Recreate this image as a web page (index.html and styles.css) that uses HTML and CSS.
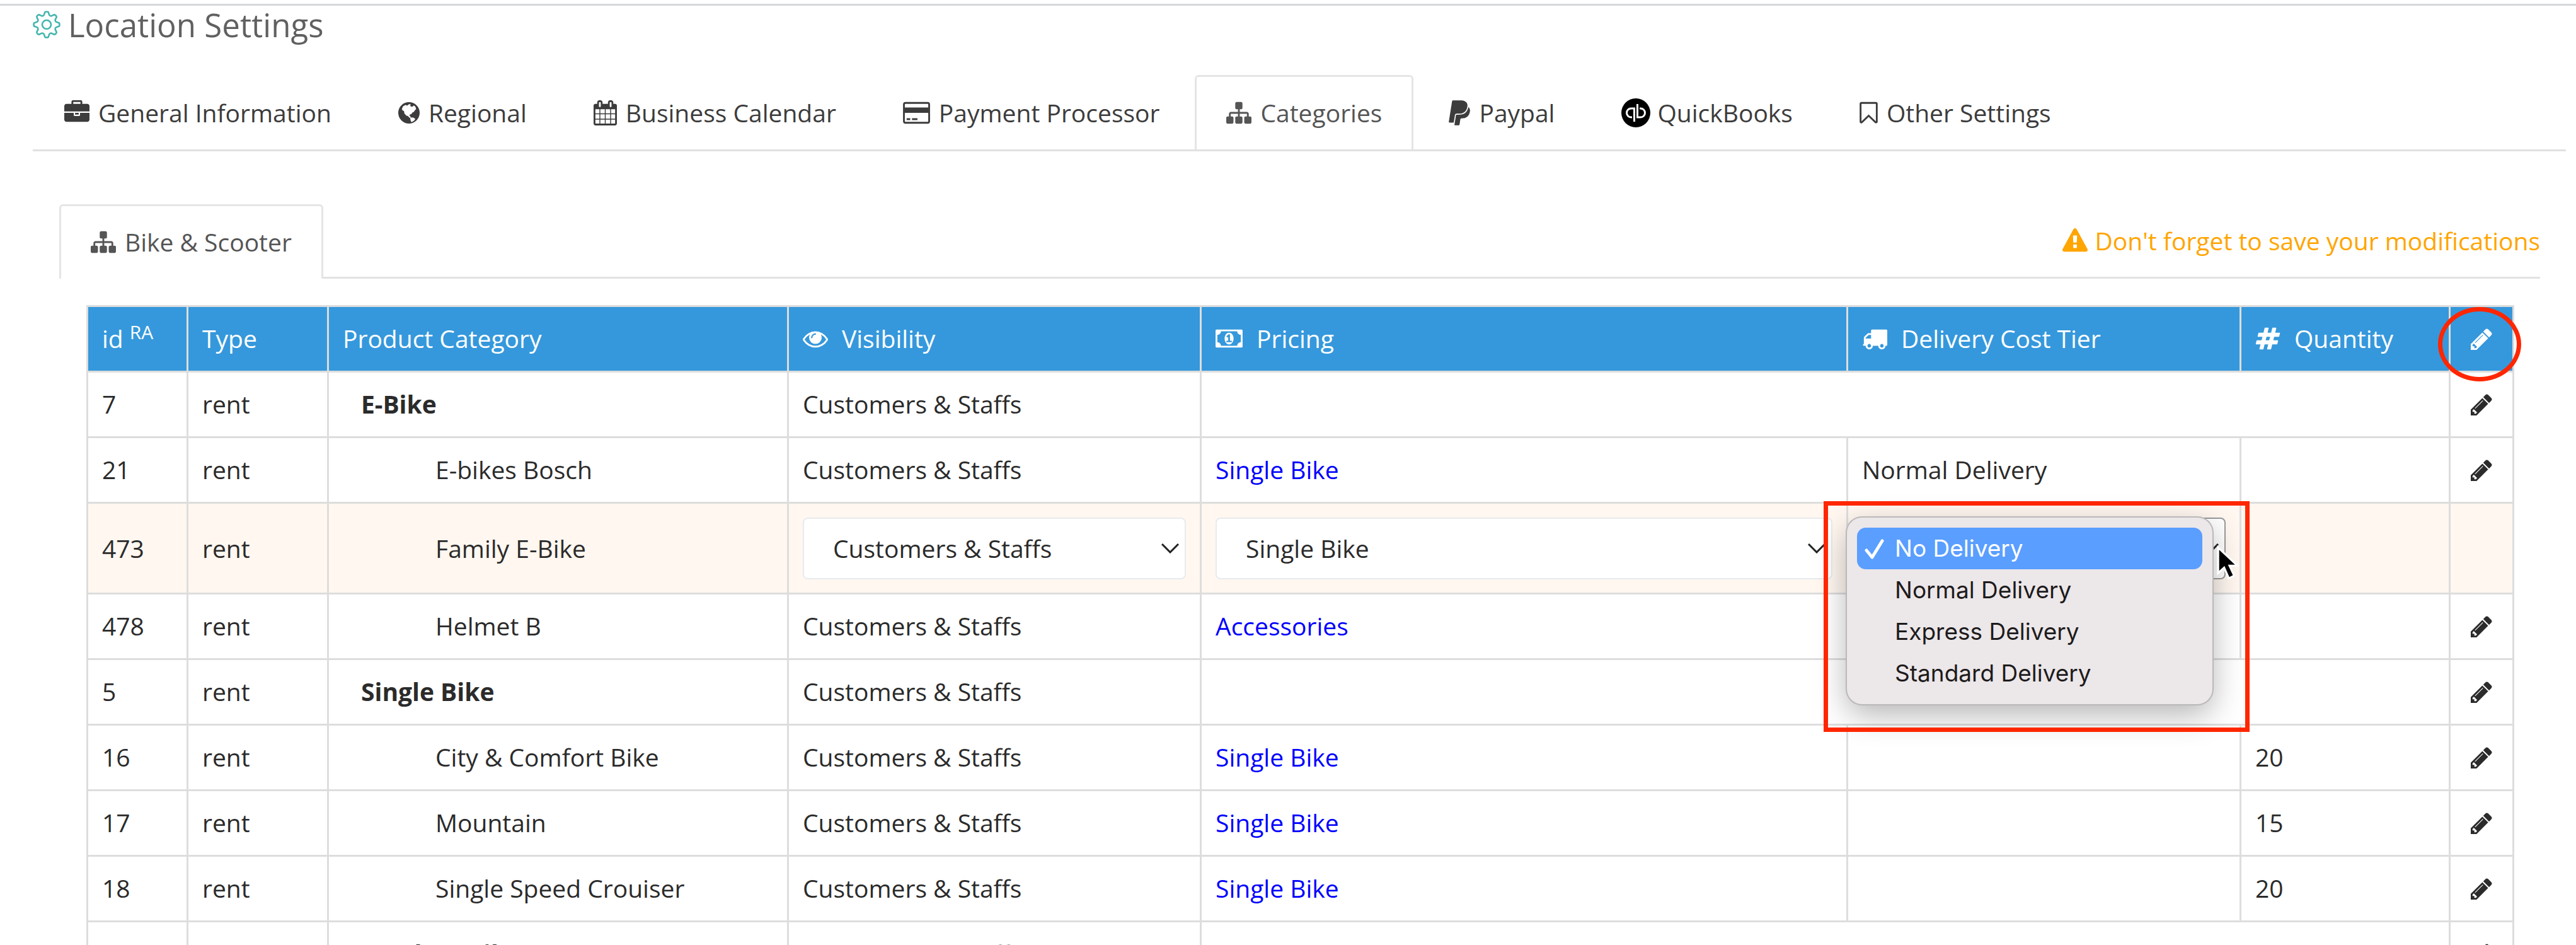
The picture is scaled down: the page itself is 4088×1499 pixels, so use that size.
FILE: index.html
```html
<!DOCTYPE html>
<html lang="en">

<head>
    <meta charset="UTF-8">
    <title>Location Settings</title>
    <link rel="stylesheet" href="styles.css">
</head>

<body>
    <!-- icon sprite -->
    <svg class="sprite" aria-hidden="true">
        <symbol id="i-gear" viewBox="0 0 44 44">
            <path fill="none" stroke="currentColor" stroke-width="2.6" stroke-linejoin="round" d="M19.5 2Q22 1 24.5 2L26.4 7.1Q28 8.600 29.4 8.400L34.300 6.200Q37 7 37.800 9.700L35.600 14.600Q35.400 16 36.900 17.600L42 19.500Q43 22 42 24.500L36.900 26.400Q35.400 28 35.600 29.400L37.800 34.300Q37 37 34.300 37.800L29.400 35.600Q28 35.400 26.400 36.900L24.500 42Q22 43 19.500 42L17.600 36.900Q16 35.400 14.600 35.600L9.700 37.800Q7 37 6.200 34.300L8.400 29.400Q8.600 28 7.100 26.400L2 24.500Q1 22 2 19.500L7.100 17.600Q8.600 16 8.400 14.600L6.200 9.700Q7 7 9.700 6.200L14.600 8.400Q16 8.600 17.600 7.100Z"/>
            <circle cx="22" cy="22" r="7" fill="none" stroke="currentColor" stroke-width="2.6"/>
        </symbol>
        <symbol id="i-briefcase" viewBox="0 0 1792 1792">
            <path d="M640 256h512v-128h-512v128zm1152 640v480q0 66-47 113t-113 47h-1472q-66 0-113-47t-47-113v-480h672v160q0 26 19 45t45 19h320q26 0 45-19t19-45v-160h672zm-768 0v128h-256v-128h256zm768-480v384h-1792v-384q0-66 47-113t113-47h352v-160q0-40 28-68t68-28h576q40 0 68 28t28 68v160h352q66 0 113 47t47 113z"/>
        </symbol>
        <symbol id="i-globe" viewBox="128 0 1536 1792">
            <circle cx="896" cy="896" r="768"/>
            <path fill="#fff" d="M390 600l90-180 170-90 120 50 130-110 130 20-50 100 90 60 110-10 40-70 110 50 60 120 20 110-80 40-70 130-130 60-60 110-110 20-20 90 70 70 20 110-110-40-90-110-130-40-130-150-30-170-110-60zM980 1280l100-60 160 30 110 90-80 110-180 110-60-60z"/>
        </symbol>
        <symbol id="i-calendar" viewBox="64 0 1664 1792">
            <path d="M192 1664h288v-288h-288v288zm352 0h320v-288h-320v288zm-352-352h288v-320h-288v320zm352 0h320v-320h-320v320zm-352-384h288v-288h-288v288zm736 736h320v-288h-320v288zm-384-736h320v-288h-320v288zm768 736h288v-288h-288v288zm-384-352h320v-320h-320v320zm-352-864v-288q0-13-9.500-22.500t-22.500-9.500h-64q-13 0-22.500 9.500t-9.500 22.500v288q0 13 9.500 22.500t22.500 9.500h64q13 0 22.500-9.500t9.500-22.500zm736 864h288v-320h-288v320zm-384-384h320v-288h-320v288zm384 0h288v-288h-288v288zm32-480v-288q0-13-9.500-22.500t-22.500-9.500h-64q-13 0-22.500 9.500t-9.500 22.500v288q0 13 9.500 22.500t22.500 9.500h64q13 0 22.500-9.500t9.500-22.500zm384-64v1280q0 52-38 90t-90 38h-1408q-52 0-90-38t-38-90v-1280q0-52 38-90t90-38h128v-96q0-66 47-113t113-47h64q66 0 113 47t47 113v96h384v-96q0-66 47-113t113-47h64q66 0 113 47t47 113v96h128q52 0 90 38t38 90z"/>
        </symbol>
        <symbol id="i-card" viewBox="0 0 1920 1792">
            <rect x="64" y="192" width="1792" height="1408" rx="110" fill="none" stroke="currentColor" stroke-width="128"/>
            <path d="M64 512h1792v384h-1792zM256 1280h256v128h-256zM640 1280h384v128h-384z"/>
        </symbol>
        <symbol id="i-sitemap" viewBox="0 0 1792 1792">
            <path d="M1792 1248v320q0 40-28 68t-68 28h-320q-40 0-68-28t-28-68v-320q0-40 28-68t68-28h96v-192h-512v192h96q40 0 68 28t28 68v320q0 40-28 68t-68 28h-320q-40 0-68-28t-28-68v-320q0-40 28-68t68-28h96v-192h-512v192h96q40 0 68 28t28 68v320q0 40-28 68t-68 28h-320q-40 0-68-28t-28-68v-320q0-40 28-68t68-28h96v-192q0-52 38-90t90-38h512v-192h-96q-40 0-68-28t-28-68v-320q0-40 28-68t68-28h320q40 0 68 28t28 68v320q0 40-28 68t-68 28h-96v192h512q52 0 90 38t38 90v192h96q40 0 68 28t28 68z"/>
        </symbol>
        <symbol id="i-paypal" viewBox="0 0 1536 1792">
            <path d="M1519 646q18 84-4 204-87 444-565 444h-44q-25 0-44 16.500t-24 42.500l-4 19-55 346-2 15q-5 26-24.500 42.500t-44.500 16.500h-251q-21 0-33-15t-9-36q9-56 26.500-168t26.500-168 27-167.500 27-167.500q5-37 43-37h131q133 2 236-21 175-39 287-144 102-95 155-246 24-70 35-133 1-6 2.500-7.500t3.500-1 6 3.500q79 59 98 162zm-172-282q0 107-46 236-80 233-302 315-113 40-252 42 0 1-90 1l-90-1q-100 0-118 96-2 8-85 530-1 10-12 10h-295q-22 0-36.500-16.500t-11.500-38.500l232-1471q5-29 27.500-48t51.500-19h598q34 0 97.500 13t111.500 32q107 41 163.500 123t56.500 196z"/>
        </symbol>
        <symbol id="i-quickbooks" viewBox="0 0 46 46">
            <circle cx="23" cy="23" r="23" fill="#000"/>
            <path fill="none" stroke="#fff" stroke-width="3" d="M17 30h-1.500a7 7 0 0 1 0-14h5v21M29 30h1.500a7 7 0 0 0 0-14h-1.500M25.500 9v21h4"/>
        </symbol>
        <symbol id="i-bookmark" viewBox="256 0 1280 1792">
            <path d="M1408 256h-1024v1242l423-406 89-85 89 85 423 406v-1242zm12-128q23 0 44 9 33 13 52.500 41t19.500 62v1289q0 34-19.500 62t-52.500 41q-19 8-44 8-48 0-83-32l-441-424-441 424q-36 33-83 33-23 0-44-9-33-13-52.500-41t-19.500-62v-1289q0-34 19.500-62t52.500-41q21-9 44-9h1048z"/>
        </symbol>
        <symbol id="i-warning" viewBox="0 0 1792 1792">
            <path d="M1024 1375v-190q0-14-9.500-23.500t-22.500-9.500h-192q-13 0-22.500 9.500t-9.500 23.500v190q0 14 9.500 23.500t22.500 9.500h192q13 0 22.500-9.500t9.500-23.500zm-2-374l18-459q0-12-10-19-13-11-24-11h-220q-11 0-24 11-10 7-10 21l17 457q0 10 10 16.500t24 6.500h185q14 0 23.500-6.500t10.500-16.500zm-14-934l768 1408q35 63-2 126-17 29-46.500 46t-63.500 17h-1536q-34 0-63.500-17t-46.500-46q-37-63-2-126l768-1408q17-31 47-49t65-18 65 18 47 49z"/>
        </symbol>
        <symbol id="i-eye" viewBox="0 0 1792 1792">
            <path d="M1664 960q-152-236-381-353 61 104 61 225 0 185-131.500 316.500t-316.500 131.500-316.500-131.500-131.500-316.500q0-121 61-225-229 117-381 353 133 205 333.500 326.500t434.500 121.500 434.500-121.500 333.500-326.500zm-720-384q0-20-14-34t-34-14q-125 0-214.500 89.500t-89.500 214.500q0 20 14 34t34 14 34-14 14-34q0-86 61-147t147-61q20 0 34-14t14-34zm848 384q0 34-20 69-140 230-376.500 368.500t-499.500 138.500-499.500-139-376.500-368q-20-35-20-69t20-69q140-229 376.500-368t499.500-139 499.500 139 376.500 368q20 35 20 69z"/>
        </symbol>
        <symbol id="i-money" viewBox="0 0 1920 1792">
            <path d="M768 1152h384v-96h-128v-448h-114l-148 137 77 80q42-37 55-57h2v288h-128v96zm512-256q0 70-21 142t-59.500 134-101.500 101-138 39-138-39-101.500-101-59.500-134-21-142 21-142 59.500-134 101.500-101 138-39 138 39 101.500 101 59.500 134 21 142zm512 256v-512q-106 0-181-75t-75-181h-1152q0 106-75 181t-181 75v512q106 0 181 75t75 181h1152q0-106 75-181t181-75zm128-832v1152q0 26-19 45t-45 19h-1792q-26 0-45-19t-19-45v-1152q0-26 19-45t45-19h1792q26 0 45 19t19 45z"/>
        </symbol>
        <symbol id="i-truck" viewBox="0 0 1792 1792">
            <path d="M640 1408q0-52-38-90t-90-38-90 38-38 90 38 90 90 38 90-38 38-90zm-384-512h384v-256h-158q-13 0-22 9l-195 195q-9 9-9 22v30zm1280 512q0-52-38-90t-90-38-90 38-38 90 38 90 90 38 90-38 38-90zm256-1088v1024q0 15-4 26.500t-13.500 18.500-16.500 11.500-23.500 6-22.500 2-25.500 0-22.500-.5q0 106-75 181t-181 75-181-75-75-181h-384q0 106-75 181t-181 75-181-75-75-181h-64q-3 0-22.500.5t-25.500 0-22.500-2-23.500-6-16.500-11.500-13.500-18.500-4-26.500q0-26 19-45t45-19v-320q0-8-.5-35t0-38 2.500-34.500 6.500-37 14-30.500 22.500-30l198-198q19-19 50.500-32t58.500-13h160v-192q0-26 19-45t45-19h1024q26 0 45 19t19 45z"/>
        </symbol>
        <symbol id="i-hash" viewBox="0 0 1792 1792">
            <path d="M991 1024l64-256h-254l-64 256h254zm768-504l-56 224q-7 24-31 24h-327l-64 256h311q15 0 25 12 10 14 6 28l-56 224q-5 24-31 24h-327l-81 328q-7 24-31 24h-224q-16 0-26-12-9-12-6-28l78-312h-254l-81 328q-7 24-31 24h-225q-15 0-25-12-9-12-6-28l78-312h-311q-15 0-25-12-9-12-6-28l56-224q7-24 31-24h327l64-256h-311q-15 0-25-12-10-14-6-28l56-224q5-24 31-24h327l81-328q7-24 32-24h224q15 0 25 12 9 12 6 28l-78 312h254l81-328q7-24 32-24h224q15 0 25 12 9 12 6 28l-78 312h311q15 0 25 12 9 12 6 28z"/>
        </symbol>
        <symbol id="i-pencil" viewBox="128 0 1536 1792">
            <path d="M491 1536l91-91-235-235-91 91v107h128v128h107zm523-928q0-22-22-22-10 0-17 7l-542 542q-7 7-7 17 0 22 22 22 10 0 17-7l542-542q7-7 7-17zm-54-192l416 416-832 832h-416v-416zm683 96q0 53-37 90l-166 166-416-416 166-165q36-38 90-38 53 0 91 38l235 234q37 39 37 91z"/>
        </symbol>
    </svg>

    <header class="page-title">
        <svg class="gear"><use href="#i-gear"/></svg>
        <h1>Location Settings</h1>
    </header>

    <nav class="tabs main-tabs">
        <a class="tab" href="#general"><svg class="icon"><use href="#i-briefcase"/></svg>General Information</a>
        <a class="tab" href="#regional"><svg class="icon w34"><use href="#i-globe"/></svg>Regional</a>
        <a class="tab" href="#calendar"><svg class="icon w37"><use href="#i-calendar"/></svg>Business Calendar</a>
        <a class="tab" href="#payment"><svg class="icon w43"><use href="#i-card"/></svg>Payment Processor</a>
        <a class="tab active" href="#categories"><svg class="icon"><use href="#i-sitemap"/></svg>Categories</a>
        <a class="tab" href="#paypal"><svg class="icon w34"><use href="#i-paypal"/></svg>Paypal</a>
        <a class="tab" href="#quickbooks"><svg class="icon qb"><use href="#i-quickbooks"/></svg>QuickBooks</a>
        <a class="tab" href="#other"><svg class="icon w29"><use href="#i-bookmark"/></svg>Other Settings</a>
    </nav>

    <main>
        <div class="tabs sub-tabs">
            <a class="tab active" href="#bike"><svg class="icon"><use href="#i-sitemap"/></svg>Bike &amp; Scooter</a>
            <p class="notice"><svg class="icon"><use href="#i-warning"/></svg>Don't forget to save your modifications</p>
        </div>

        <div class="table-wrap">
            <table>
                <colgroup>
                    <col class="c-id">
                    <col class="c-type">
                    <col class="c-product">
                    <col class="c-visibility">
                    <col class="c-pricing">
                    <col class="c-delivery">
                    <col class="c-quantity">
                    <col class="c-edit">
                </colgroup>
                <thead>
                    <tr>
                        <th>id <sup>RA</sup></th>
                        <th>Type</th>
                        <th>Product Category</th>
                        <th><span class="head"><svg class="icon"><use href="#i-eye"/></svg>Visibility</span></th>
                        <th><span class="head"><svg class="icon w43"><use href="#i-money"/></svg>Pricing</span></th>
                        <th><span class="head"><svg class="icon"><use href="#i-truck"/></svg>Delivery Cost Tier</span></th>
                        <th><span class="head"><svg class="icon"><use href="#i-hash"/></svg>Quantity</span></th>
                        <th class="edit"><button type="button" aria-label="Edit all"><svg class="icon w34"><use href="#i-pencil"/></svg></button><span class="mark-circle"></span></th>
                    </tr>
                </thead>
                <tbody>
                    <tr>
                        <td>7</td>
                        <td>rent</td>
                        <td class="parent">E-Bike</td>
                        <td>Customers &amp; Staffs</td>
                        <td colspan="3"></td>
                        <td class="edit"><button type="button" aria-label="Edit E-Bike"><svg class="icon w34"><use href="#i-pencil"/></svg></button></td>
                    </tr>
                    <tr>
                        <td>21</td>
                        <td>rent</td>
                        <td class="child">E-bikes Bosch</td>
                        <td>Customers &amp; Staffs</td>
                        <td><a href="#single-bike">Single Bike</a></td>
                        <td>Normal Delivery</td>
                        <td></td>
                        <td class="edit"><button type="button" aria-label="Edit E-bikes Bosch"><svg class="icon w34"><use href="#i-pencil"/></svg></button></td>
                    </tr>
                    <tr class="editing">
                        <td>473</td>
                        <td>rent</td>
                        <td class="child">Family E-Bike</td>
                        <td>
                            <div class="select">
                                <select aria-label="Visibility"><option>Customers &amp; Staffs</option></select>
                                <svg class="chevron" viewBox="0 0 28 16"><path d="M1 1l13 13 13-13"/></svg>
                            </div>
                        </td>
                        <td>
                            <div class="select">
                                <select aria-label="Pricing"><option>Single Bike</option></select>
                                <svg class="chevron" viewBox="0 0 28 16"><path d="M1 1l13 13 13-13"/></svg>
                            </div>
                        </td>
                        <td>
                            <div class="select open">
                                <select aria-label="Delivery cost tier">
                                    <option>No Delivery</option>
                                    <option>Normal Delivery</option>
                                    <option>Express Delivery</option>
                                    <option>Standard Delivery</option>
                                </select>
                                <svg class="chevron" viewBox="0 0 28 16"><path d="M1 1l13 13 13-13"/></svg>
                                <ul class="menu">
                                    <li class="selected"><svg class="check" viewBox="0 0 32 32"><path d="M3 18l9 11 16-26"/></svg>No Delivery</li>
                                    <li>Normal Delivery</li>
                                    <li>Express Delivery</li>
                                    <li>Standard Delivery</li>
                                </ul>
                                <span class="mark-box"></span>
                                <svg class="pointer" viewBox="0 0 34 52"><path d="M2 3v38l9-8 7 16 8-4-7-15h12z"/></svg>
                            </div>
                        </td>
                        <td></td>
                        <td></td>
                    </tr>
                    <tr>
                        <td>478</td>
                        <td>rent</td>
                        <td class="child">Helmet B</td>
                        <td>Customers &amp; Staffs</td>
                        <td><a href="#accessories">Accessories</a></td>
                        <td></td>
                        <td></td>
                        <td class="edit"><button type="button" aria-label="Edit Helmet B"><svg class="icon w34"><use href="#i-pencil"/></svg></button></td>
                    </tr>
                    <tr>
                        <td>5</td>
                        <td>rent</td>
                        <td class="parent">Single Bike</td>
                        <td>Customers &amp; Staffs</td>
                        <td colspan="3"></td>
                        <td class="edit"><button type="button" aria-label="Edit Single Bike"><svg class="icon w34"><use href="#i-pencil"/></svg></button></td>
                    </tr>
                    <tr>
                        <td>16</td>
                        <td>rent</td>
                        <td class="child">City &amp; Comfort Bike</td>
                        <td>Customers &amp; Staffs</td>
                        <td><a href="#single-bike">Single Bike</a></td>
                        <td></td>
                        <td>20</td>
                        <td class="edit"><button type="button" aria-label="Edit City &amp; Comfort Bike"><svg class="icon w34"><use href="#i-pencil"/></svg></button></td>
                    </tr>
                    <tr>
                        <td>17</td>
                        <td>rent</td>
                        <td class="child">Mountain</td>
                        <td>Customers &amp; Staffs</td>
                        <td><a href="#single-bike">Single Bike</a></td>
                        <td></td>
                        <td>15</td>
                        <td class="edit"><button type="button" aria-label="Edit Mountain"><svg class="icon w34"><use href="#i-pencil"/></svg></button></td>
                    </tr>
                    <tr>
                        <td>18</td>
                        <td>rent</td>
                        <td class="child">Single Speed Crouiser</td>
                        <td>Customers &amp; Staffs</td>
                        <td><a href="#single-bike">Single Bike</a></td>
                        <td></td>
                        <td>20</td>
                        <td class="edit"><button type="button" aria-label="Edit Single Speed Crouiser"><svg class="icon w34"><use href="#i-pencil"/></svg></button></td>
                    </tr>
                    <tr>
                        <td>6</td>
                        <td>rent</td>
                        <td class="parent">Tandem Bike</td>
                        <td>Customers &amp; Staffs</td>
                        <td colspan="3"></td>
                        <td class="edit"><button type="button" aria-label="Edit Tandem Bike"><svg class="icon w34"><use href="#i-pencil"/></svg></button></td>
                    </tr>
                </tbody>
            </table>
        </div>
    </main>
</body>

</html>
```
FILE: styles.css
```css
* {
    box-sizing: border-box;
}

html {
    height: 100%;
    overflow: hidden;
}

body {
    height: 100%;
    margin: 0;
    padding: 6px 16px 0 52px;
    overflow: hidden;
    background: #fff;
    background-image: linear-gradient(#d5d8db, #d5d8db);
    background-repeat: no-repeat;
    background-size: 100% 3px;
    background-position: 0 6px;
    font-family: "Open Sans", sans-serif;
    font-size: 39px;
    line-height: 60px;
    color: #2b2b2b;
}

.sprite {
    display: none;
}

.icon {
    width: 40px;
    height: 40px;
    flex: none;
    fill: currentColor;
}

.w29 { width: 29px; }
.w34 { width: 34px; }
.w37 { width: 37px; }
.w43 { width: 43px; }

.qb {
    width: 46px;
    height: 46px;
    margin-right: -3px;
}

.page-title {
    display: flex;
    align-items: center;
    gap: 12px;
    height: 66px;
    color: #606060;
}

.page-title h1 {
    margin: 0;
    font-size: 51px;
    font-weight: 400;
}

.gear {
    width: 44px;
    height: 44px;
    color: #44b6ae;
}

/* tabs */
.tabs {
    display: flex;
    border-bottom: 3px solid #e1e1e1;
}

.main-tabs {
    margin-top: 47px;
}

.tab {
    display: flex;
    align-items: center;
    gap: 14px;
    margin-right: 6px;
    padding: 27px 47px 28px;
    border: 3px solid transparent;
    border-bottom: 0;
    color: #3c3c3c;
    text-decoration: none;
    white-space: nowrap;
}

.tab.active {
    border-color: #e5e5e5;
    border-radius: 6px 6px 0 0;
    color: #555;
}

main {
    padding: 84px 41px 0 42px;
}

.sub-tabs .tab.active {
    margin-bottom: -3px;
    background: #fff;
}

.notice {
    display: flex;
    align-items: center;
    gap: 12px;
    margin: 0 0 0 auto;
    color: #ffa500;
}

.table-wrap {
    padding: 42px 41px 0 43px;
}

/* categories table */
table {
    width: 100%;
    table-layout: fixed;
    border-collapse: collapse;
}

.c-id { width: 159px; }
.c-type { width: 223px; }
.c-product { width: 730px; }
.c-visibility { width: 655px; }
.c-delivery { width: 624px; }
.c-quantity { width: 332px; }
.c-edit { width: 101px; }

th, td {
    height: 104px;
    padding: 20px 22px 21px;
    border: 3px solid #ddd;
    text-align: left;
    white-space: nowrap;
}

th {
    background: #3598dc;
    color: #fff;
    font-weight: 400;
}

th sup {
    font-size: 30px;
    line-height: 0;
}

.head {
    display: flex;
    align-items: center;
    gap: 22px;
}

.parent {
    padding-left: 51px;
    font-weight: 700;
}

.child {
    padding-left: 169px;
}

td a {
    color: #00f;
    text-decoration: none;
}

.edit {
    position: relative;
    padding: 0;
}

.edit button {
    display: flex;
    margin: 0 auto;
    padding: 0;
    border: 0;
    background: none;
    color: inherit;
    cursor: pointer;
}

.editing td {
    padding-top: 22px;
    padding-bottom: 21px;
    background: #fff7f0;
}

.select {
    position: relative;
}

.select select {
    display: block;
    width: 100%;
    height: 98px;
    padding: 0 46px;
    border: 2px solid #e8ebee;
    border-radius: 8px;
    background: #fff;
    color: #2b2b2b;
    font: inherit;
    appearance: none;
}

.select.open select {
    border-color: #999;
}

.chevron {
    position: absolute;
    top: 41px;
    right: 11px;
    width: 28px;
    height: 16px;
    fill: none;
    stroke: #222;
    stroke-width: 3;
}

/* dropdown list */
.menu {
    position: absolute;
    z-index: 1;
    top: 0;
    left: -24px;
    width: 580px;
    margin: 0;
    padding: 16px;
    border-radius: 24px;
    background: #ece7e9;
    box-shadow: 0 0 0 2px #bbb8b9, 0 16px 50px rgba(0, 0, 0, 0.3);
    color: #1d1b1c;
    font-family: Inter, sans-serif;
    font-size: 37px;
    line-height: 66px;
    list-style: none;
}

.menu li {
    position: relative;
    padding-left: 60px;
    border-radius: 14px;
}

.menu .selected {
    background: #5a9eff;
    color: #fff;
}

.check {
    position: absolute;
    top: 18px;
    left: 12px;
    width: 32px;
    height: 32px;
    fill: none;
    stroke: #fff;
    stroke-width: 5;
    stroke-linecap: round;
    stroke-linejoin: round;
}

.pointer {
    position: absolute;
    z-index: 3;
    top: 44px;
    right: -22px;
    width: 36px;
    height: 56px;
    fill: #000;
    stroke: #fff;
    stroke-width: 3;
}

/* red highlights */
.mark-box {
    position: absolute;
    z-index: 2;
    top: -26px;
    left: -61px;
    width: 676px;
    height: 366px;
    border: 7px solid #ff2600;
}

.mark-circle {
    position: absolute;
    z-index: 2;
    top: 0;
    left: -20px;
    width: 132px;
    height: 118px;
    border: 7px solid #ff2600;
    border-radius: 50%;
}
```
